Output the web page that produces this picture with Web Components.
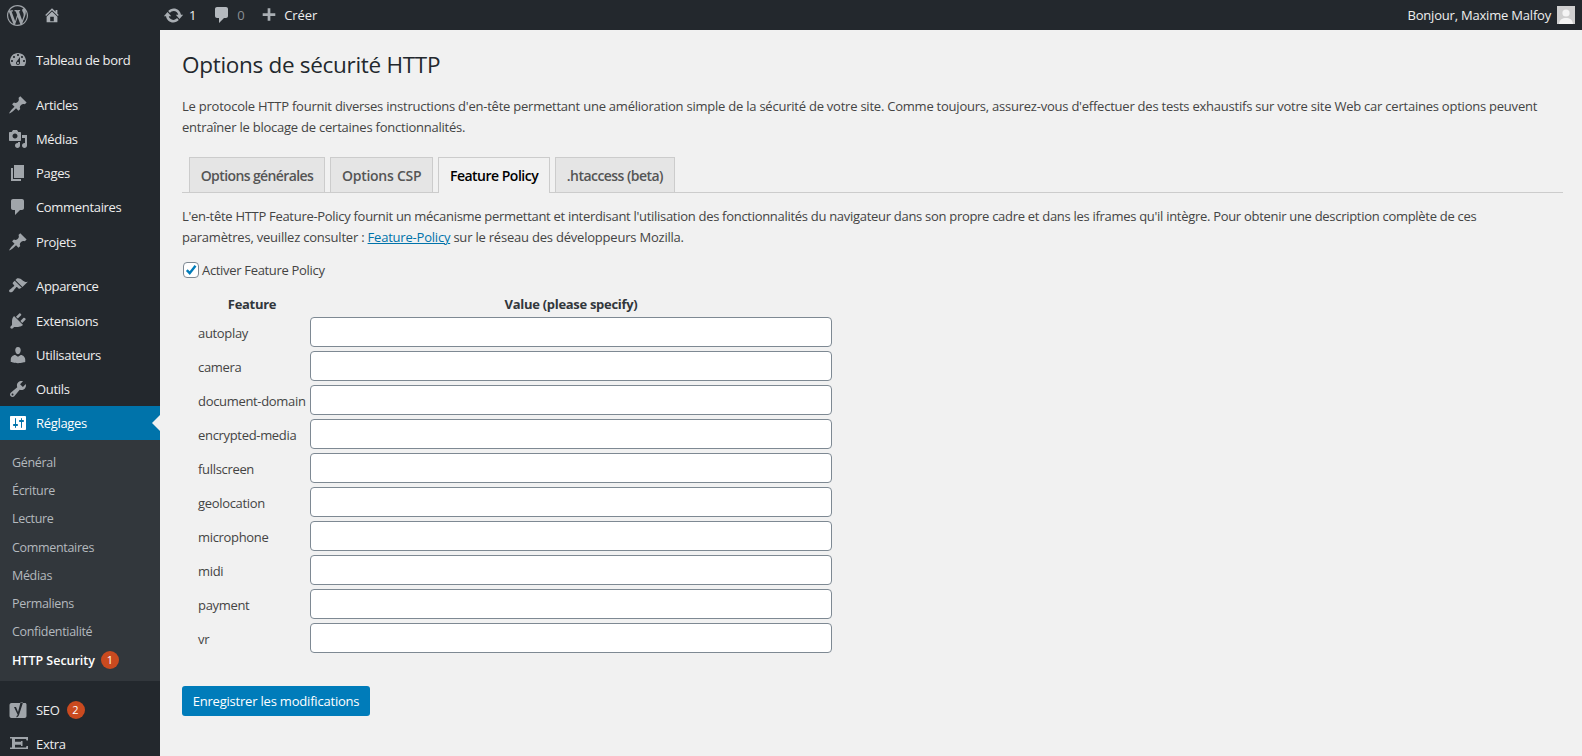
<!DOCTYPE html>
<html lang="fr"><head><meta charset="utf-8"><title>Options de sécurité HTTP</title>
<style>
html,body{margin:0;height:756px;overflow:hidden;background:#f1f1f1}
body{font:13px/21px "Open Sans","Noto Sans",sans-serif;letter-spacing:-.32px;color:#444}
</style></head><body>
<wp-shell>
  <wp-adminbar slot="bar"></wp-adminbar>
  <wp-sidemenu slot="side">
    <wp-menu-item icon="dashboard">Tableau de bord</wp-menu-item>
    <wp-sep></wp-sep>
    <wp-menu-item icon="post">Articles</wp-menu-item>
    <wp-menu-item icon="media">Médias</wp-menu-item>
    <wp-menu-item icon="page">Pages</wp-menu-item>
    <wp-menu-item icon="comment">Commentaires</wp-menu-item>
    <wp-menu-item icon="post">Projets</wp-menu-item>
    <wp-sep></wp-sep>
    <wp-menu-item icon="appearance">Apparence</wp-menu-item>
    <wp-menu-item icon="plugins">Extensions</wp-menu-item>
    <wp-menu-item icon="users">Utilisateurs</wp-menu-item>
    <wp-menu-item icon="tools">Outils</wp-menu-item>
    <wp-menu-item icon="settings" active>Réglages</wp-menu-item>
    <wp-submenu>
      <wp-sub-item>Général</wp-sub-item>
      <wp-sub-item>Écriture</wp-sub-item>
      <wp-sub-item>Lecture</wp-sub-item>
      <wp-sub-item>Commentaires</wp-sub-item>
      <wp-sub-item>Médias</wp-sub-item>
      <wp-sub-item>Permaliens</wp-sub-item>
      <wp-sub-item>Confidentialité</wp-sub-item>
      <wp-sub-item current badge="1">HTTP Security</wp-sub-item>
    </wp-submenu>
    <wp-menu-item icon="yoast" badge="2">SEO</wp-menu-item>
    <wp-menu-item icon="extra">Extra</wp-menu-item>
  </wp-sidemenu>
  <sec-page slot="main" heading="Options de sécurité HTTP">
    <span slot="intro" style="letter-spacing:-.23px">Le protocole HTTP fournit diverses instructions d'en-tête permettant une amélioration simple de la sécurité de votre site. Comme toujours, assurez-vous d'effectuer des tests exhaustifs sur votre site Web car certaines options peuvent entraîner le blocage de certaines fonctionnalités.</span>
    <sec-tabs slot="tabs">
      <sec-tab style="letter-spacing:-.6px">Options générales</sec-tab>
      <sec-tab style="letter-spacing:-.27px">Options CSP</sec-tab>
      <sec-tab active style="letter-spacing:-.5px">Feature Policy</sec-tab>
      <sec-tab style="letter-spacing:-.55px">.htaccess (beta)</sec-tab>
    </sec-tabs>
    <span slot="desc"><span style="letter-spacing:-.295px">L'en-tête HTTP Feature-Policy fournit un mécanisme permettant et interdisant l'utilisation des fonctionnalités du navigateur dans son propre cadre et dans les iframes qu'il intègre. Pour obtenir une description complète de ces</span><br><span style="letter-spacing:-.21px">paramètres, veuillez consulter : <sec-link>Feature-Policy</sec-link> sur le réseau des développeurs Mozilla.</span></span>
    <sec-check slot="check">Activer Feature Policy</sec-check>
    <sec-table slot="table">
      <sec-row>autoplay</sec-row>
      <sec-row>camera</sec-row>
      <sec-row>document-domain</sec-row>
      <sec-row>encrypted-media</sec-row>
      <sec-row>fullscreen</sec-row>
      <sec-row>geolocation</sec-row>
      <sec-row>microphone</sec-row>
      <sec-row>midi</sec-row>
      <sec-row>payment</sec-row>
      <sec-row>vr</sec-row>
    </sec-table>
    <sec-button slot="action">Enregistrer les modifications</sec-button>
  </sec-page>
</wp-shell>
<script>
const ICONS={
logo:'M20 10c0-5.51-4.49-10-10-10C4.48 0 0 4.49 0 10c0 5.52 4.48 10 10 10 5.51 0 10-4.48 10-10zM7.78 15.37L4.37 6.22c.55-.02 1.17-.08 1.17-.08.5-.06.44-1.13-.06-1.11 0 0-1.45.11-2.37.11-.18 0-.37 0-.58-.01C4.12 2.69 6.87 1.11 10 1.11c2.33 0 4.45.87 6.05 2.34-.68-.11-1.65.39-1.65 1.58 0 .74.45 1.36.9 2.1.35.61.55 1.36.55 2.46 0 1.49-1.4 5-1.4 5l-3.03-8.37c.54-.02.82-.17.82-.17.5-.05.44-1.25-.06-1.22 0 0-1.44.12-2.38.12-.87 0-2.33-.12-2.33-.12-.5-.03-.56 1.2-.06 1.22l.92.08 1.26 3.41zM17.41 10c.24-.64.74-1.87.43-4.25.7 1.29 1.05 2.71 1.05 4.25 0 3.29-1.73 6.24-4.4 7.78.97-2.59 1.94-5.2 2.92-7.78zM6.1 18.09C3.12 16.65 1.11 13.53 1.11 10c0-1.3.23-2.48.72-3.59C3.25 10.3 4.67 14.2 6.1 18.09zm4.03-6.63l2.58 6.98c-.86.29-1.76.45-2.71.45-.79 0-1.57-.11-2.29-.33.81-2.38 1.62-4.74 2.42-7.1z',
home:'M16 8.5l1.53 1.53-1.06 1.06L10 4.62l-6.47 6.47-1.06-1.06L10 2.5l4 4v-2h2v4zm-6-2.46l6 5.99V18H4v-5.97zM12 17v-5H8v5h4z',
update:'M10.2 3.28c3.53 0 6.43 2.61 6.92 6h2.08l-3.5 4-3.5-4h2.32c-.45-1.97-2.21-3.45-4.32-3.45-1.45 0-2.73.71-3.54 1.78L4.95 5.66C6.23 4.2 8.11 3.28 10.2 3.28zm-.4 13.44c-3.52 0-6.43-2.61-6.92-6H.8l3.5-4c1.17 1.33 2.33 2.67 3.5 4H5.48c.45 1.97 2.21 3.45 4.32 3.45 1.45 0 2.73-.71 3.54-1.78l1.71 1.95c-1.28 1.46-3.15 2.38-5.25 2.38z',
plus:'M17 8v3h-5.5v5.500h-3V11H3V8h5.500V2.500h3V8z',
dashboard:'M3.76 16h12.48c1.1-1.37 1.76-3.11 1.76-5 0-4.42-3.58-8-8-8s-8 3.58-8 8c0 1.89.66 3.63 1.76 5zM10 4c.55 0 1 .45 1 1s-.45 1-1 1-1-.45-1-1 .45-1 1-1zM6 6c.55 0 1 .45 1 1s-.45 1-1 1-1-.45-1-1 .45-1 1-1zm8 0c.55 0 1 .45 1 1s-.45 1-1 1-1-.45-1-1 .45-1 1-1zm-5.370 5.550L12 7v6c0 1.100-.9 2-2 2s-2-.9-2-2c0-.57.24-1.080.63-1.450zM4 10c.55 0 1 .45 1 1s-.45 1-1 1-1-.45-1-1 .45-1 1-1zm12 0c.55 0 1 .45 1 1s-.45 1-1 1-1-.45-1-1 .45-1 1-1zm-5 3c0-.55-.45-1-1-1s-1 .45-1 1 .45 1 1 1 1-.45 1-1z',
post:'M10.44 3.020l1.820-1.820 6.360 6.350-1.830 1.820c-1.050-.68-2.480-.57-3.410.36l-.75.75c-.92.93-1.040 2.350-.35 3.410l-1.830 1.820-2.410-2.410-2.800 2.790c-.42.42-3.380 2.710-3.800 2.290s1.860-3.390 2.280-3.810l2.790-2.790L4.100 9.360l1.830-1.820c1.050.69 2.480.57 3.400-.36l.75-.75c.93-.92 1.050-2.350.36-3.410z',
media:'M13 11V4c0-.55-.45-1-1-1h-1.670L9 1H5L3.670 3H2c-.55 0-1 .45-1 1v7c0 .55.45 1 1 1h10c.55 0 1-.45 1-1zM7 4.500c1.380 0 2.500 1.120 2.500 2.500S8.380 9.500 7 9.500 4.500 8.380 4.500 7 5.620 4.500 7 4.500zM14 6h5v10.500c0 1.380-1.120 2.500-2.500 2.500S14 17.880 14 16.500s1.120-2.500 2.500-2.500c.17 0 .34.02.5.05V9h-3V6zm-4 8.050V13h2v3.500c0 1.380-1.120 2.500-2.500 2.500S7 17.880 7 16.500 8.120 14 9.500 14c.17 0 .34.02.5.05z',
page:'M6 15V2h10v13H6zm-1 1h8v2H3V5h2v11z',
comment:'M5 2h9c1.100 0 2 .9 2 2v7c0 1.100-.9 2-2 2h-2l-5 5v-5H5c-1.100 0-2-.9-2-2V4c0-1.100.9-2 2-2z',
appearance:'M14.480 11.060L7.410 3.990l1.500-1.500c.5-.56 2.300-.47 3.510.32 1.210.8 1.430 1.280 2.910 2.100 1.180.64 2.450 1.260 4.450.85zm-.71.71L6.700 4.700 4.930 6.470c-.39.39-.39 1.020 0 1.410l1.060 1.060c.39.39.39 1.030 0 1.420-.6.6-1.430 1.110-2.210 1.690-.35.26-.7.53-1.010.84C1.430 13.230.4 14.750 1.530 15.880c1.130 1.130 2.640.1 3.990-1.250.31-.31.58-.66.85-1.020.57-.78 1.080-1.610 1.690-2.210.39-.39 1.020-.39 1.410 0l1.060 1.060c.39.39 1.020.39 1.410 0z',
plugins:'M13.110 4.360L9.870 7.600 8 5.730l3.240-3.240c.35-.34 1.050-.2 1.560.32.52.51.66 1.210.31 1.550zm-8 1.770l.91-1.120 9.010 9.010-1.190.84c-.71.71-2.630 1.160-3.820 1.160H6.140L4.900 17.260c-.59.59-1.540.59-2.120 0-.59-.58-.59-1.530 0-2.120l1.240-1.240v-3.880c0-1.130.4-3.190 1.090-3.890zm7.260 3.970l3.240-3.240c.34-.35 1.040-.21 1.550.31.52.51.66 1.210.31 1.550l-3.240 3.250z',
users:'M10 9.250c-2.270 0-2.730-3.440-2.730-3.440C7 4.020 7.820 2 9.970 2c2.160 0 2.980 2.020 2.710 3.810 0 0-.41 3.440-2.680 3.440zm0 2.570L12.720 10c2.390 0 4.520 2.330 4.520 4.530v2.490s-3.650 1.130-7.240 1.130c-3.650 0-7.240-1.130-7.240-1.130v-2.490c0-2.250 1.940-4.480 4.470-4.480z',
tools:'M16.680 9.770c-1.340 1.340-3.300 1.670-4.950.99l-5.410 6.520c-.99.99-2.590.99-3.580 0s-.99-2.590 0-3.570l6.520-5.420c-.68-1.650-.35-3.610.99-4.950 1.280-1.280 3.120-1.620 4.720-1.060l-2.890 2.890 2.820 2.820 2.860-2.870c.53 1.580.18 3.390-1.080 4.650zM3.810 16.210c.4.39 1.040.39 1.430 0 .4-.4.4-1.040 0-1.430-.39-.4-1.030-.4-1.430 0-.39.39-.39 1.030 0 1.430z',
settings:'M18 16V4c0-.55-.45-1-1-1H3c-.55 0-1 .45-1 1v12c0 .55.45 1 1 1h14c.55 0 1-.45 1-1zM8 11h1c.55 0 1 .45 1 1s-.45 1-1 1H8v1.500c0 .28-.22.5-.5.5s-.5-.22-.5-.5V13H6c-.55 0-1-.45-1-1s.45-1 1-1h1V5.500c0-.28.22-.5.5-.5s.5.22.5.5V11zm5-2h-1c-.55 0-1-.45-1-1s.45-1 1-1h1V5.500c0-.28.22-.5.5-.5s.5.22.5.5V7h1c.55 0 1 .45 1 1s-.45 1-1 1h-1v5.500c0 .28-.22.5-.5.5s-.5-.22-.5-.5V9z',
yoast:'M3.500 3H17c.8 0 1.500.7 1.500 1.500V16c0 1.100-.9 2-2 2H3.500c-1 0-2-.9-2-2V5c0-1.100 1-2 2-2zM6 7h2l2 5 2.500-9.500h2.500L11 15c-.4 1.300-1.200 2-2.500 2.500V16c.7-.2 1-.6 1.200-1.300L6 7z',
extra:'M2 3h18v3.500h-1.500L18 5H7v2.800h6V7h1.500v5H13v-1.200H7v2.700h11l.5-1.500H20V15H2v-1.500h2V4.500H2z'
};
const ico=(n,s=20)=>`<svg width="${s}" height="${s}" viewBox="0 0 20 20" fill="currentColor" fill-rule="${n==='yoast'?'evenodd':'nonzero'}" aria-hidden="true"><path d="${ICONS[n]}"/></svg>`;
function def(name,html,init){
  const t=document.createElement('template');t.innerHTML=html;
  customElements.define(name,class extends HTMLElement{
    constructor(){super();this.attachShadow({mode:'open'}).appendChild(t.content.cloneNode(true))}
    connectedCallback(){init&&init.call(this,this.shadowRoot)}
  });
}
def('wp-shell',`<style>:host{display:grid;grid-template:30px 726px/160px 1fr;height:756px;overflow:hidden}
.b{grid-column:1/3;display:block}.s{display:block;min-height:0;overflow:hidden}.m{display:block;min-width:0}</style>
<div class="b"><slot name="bar"></slot></div><div class="s"><slot name="side"></slot></div><div class="m"><slot name="main"></slot></div>`);
def('wp-adminbar',`<style>:host{display:flex;align-items:center;height:30px;background:#23282d;color:#eee;line-height:30px}
.ic{display:flex;color:#a9aeb3}
.u{margin-left:auto;display:flex;align-items:center;padding-right:7px;letter-spacing:-.2px}
.av{display:flex;width:18px;height:18px;margin-left:6px;background:#ddd;overflow:hidden}
.cut{white-space:nowrap;letter-spacing:-.1px}
</style>
<span class="ic" style="margin-left:7px;color:#9ea3a8">${ico('logo',21)}</span>
<span class="ic" style="margin-left:15px">${ico('home',18)}</span>
<span class="ic" style="margin-left:102px">${ico('update',21)}</span><span style="margin-left:5px">1</span>
<span class="ic" style="margin-left:16px;color:#b4b9be">${ico('comment',20)}</span><span style="margin-left:5px;color:#8a8f94">0</span>
<span class="ic" style="margin-left:16px">${ico('plus',18)}</span><span class="cut" style="margin-left:6px">Créer</span>
<span class="u">Bonjour, Maxime Malfoy<span class="av"><svg width="18" height="18" viewBox="0 0 18 18"><rect width="18" height="18" fill="#cfcfcf"/><circle cx="9" cy="7" r="3.600" fill="#f4f4f4"/><path d="M2 18c.5-4.500 3.500-6 7-6s6.500 1.500 7 6z" fill="#f4f4f4"/></svg></span></span>`);
def('wp-sidemenu',`<style>:host{display:block;background:#23282d;height:726px;padding-top:13px;box-sizing:border-box;overflow:hidden}</style><slot></slot>`);
def('wp-sep',`<style>:host{display:block;height:10.6px}</style>`);
def('wp-menu-item',`<style>:host{display:flex;align-items:center;height:34.2px;color:#eee;position:relative}
:host([active]){background:#0073aa;color:#fff;height:34px}
.i{display:flex;width:20px;margin:0 8px;color:#a0a5aa}:host([active]) .i{color:#fff}
.lb{padding-top:1px}
.bd{display:none;width:18px;height:18px;border-radius:50%;background:#ca4a1f;color:#fff;font-size:11px;line-height:18px;text-align:center;margin-left:7px;letter-spacing:0}
.ar{display:none;position:absolute;right:0;top:9px;border:8px solid transparent;border-right-color:#f1f1f1;border-left:0}
:host([active]) .ar{display:block}
</style><span class="i"></span><span class="lb"><slot></slot></span><span class="bd"></span><span class="ar"></span>`,function(r){
  r.querySelector('.i').innerHTML=ico(this.getAttribute('icon'));
  if(this.hasAttribute('badge')){const b=r.querySelector('.bd');b.textContent=this.getAttribute('badge');b.style.display='block'}
});
def('wp-submenu',`<style>:host{display:block;background:#32373c;padding:8px 0 6.600px;margin-bottom:12px}</style><slot></slot>`);
def('wp-sub-item',`<style>:host{display:flex;align-items:center;height:28.300px;padding-left:12px;color:#b4b9be;font-size:12.500px}
:host([current]){color:#fff;font-weight:600;letter-spacing:-.02px}
.bd{display:none;width:18px;height:18px;border-radius:50%;background:#ca4a1f;color:#fff;font-size:11px;font-weight:400;line-height:18px;text-align:center;margin-left:6px;letter-spacing:0}
</style><slot></slot><span class="bd"></span>`,function(r){
  if(this.hasAttribute('badge')){const b=r.querySelector('.bd');b.textContent=this.getAttribute('badge');b.style.display='block'}
});
def('sec-page',`<style>:host{display:block;padding:20px 19px 0 22px}
h1{margin:0 0 15.500px;font-size:22.500px;font-weight:400;line-height:30px;color:#23282d;letter-spacing:-.3px}
.p{display:block;margin:0}.t{display:block;margin:19.500px 0 13px}.c{display:block;margin:12px 0 14px}.a{display:block;margin-top:33px}
</style><h1></h1><div class="p"><slot name="intro"></slot></div><div class="t"><slot name="tabs"></slot></div><div class="p"><slot name="desc"></slot></div><div class="c"><slot name="check"></slot></div><slot name="table"></slot><div class="a"><slot name="action"></slot></div>`,function(r){r.querySelector('h1').textContent=this.getAttribute('heading')});
def('sec-tabs',`<style>:host{display:flex;gap:5.300px;padding-left:7px;border-bottom:1px solid #ccc;height:35px}</style><slot></slot>`);
def('sec-tab',`<style>:host{display:flex;align-items:center;box-sizing:border-box;height:35px;padding:0 10.700px;background:#e5e5e5;border:1px solid #ccc;border-bottom:0;color:#555;font-size:14px;font-weight:600}
:host([active]){background:#f1f1f1;height:36px;color:#000}</style><slot></slot>`);
def('sec-link',`<style>:host{display:inline;color:#0073aa;text-decoration:underline}</style><slot></slot>`);
def('sec-check',`<style>:host{display:flex;align-items:center;height:20px;gap:3px;padding-left:1px}
.b{display:flex;width:14px;height:14px;border:1px solid #7e8993;border-radius:4px;background:#fff;color:#007cba}</style>
<span class="b"><svg width="14" height="14" viewBox="0 0 14 14"><path d="M2.800 7.200l2.900 3 5.800-7.400" fill="none" stroke="currentColor" stroke-width="2.400"/></svg></span><slot></slot>`);
def('sec-table',`<style>:host{display:grid;grid-template-columns:128px 522px;row-gap:4px;justify-content:start}
.h{font-weight:700;text-align:center;height:20px;line-height:20px;color:#32373c;margin-bottom:-1px;letter-spacing:-.3px}.h.f{padding-left:12px}
</style><div class="h f">Feature</div><div class="h">Value (please specify)</div><slot></slot>`);
def('sec-row',`<style>:host{display:grid;grid-template-columns:subgrid;grid-column:1/3;align-items:center;height:30px}
.l{padding:2px 0 0 16px}input{box-sizing:border-box;width:522px;height:30px;margin:0;border:1px solid #7e8993;border-radius:4px;background:#fff;display:block}
</style><div class="l"><slot></slot></div><input type="text">`);
def('sec-button',`<style>:host{display:inline-flex;align-items:center;justify-content:center;box-sizing:border-box;width:188px;height:30px;background:#007cba;color:#fff;border-radius:3px;letter-spacing:-.2px}</style><slot></slot>`);
</script>
</body></html>
